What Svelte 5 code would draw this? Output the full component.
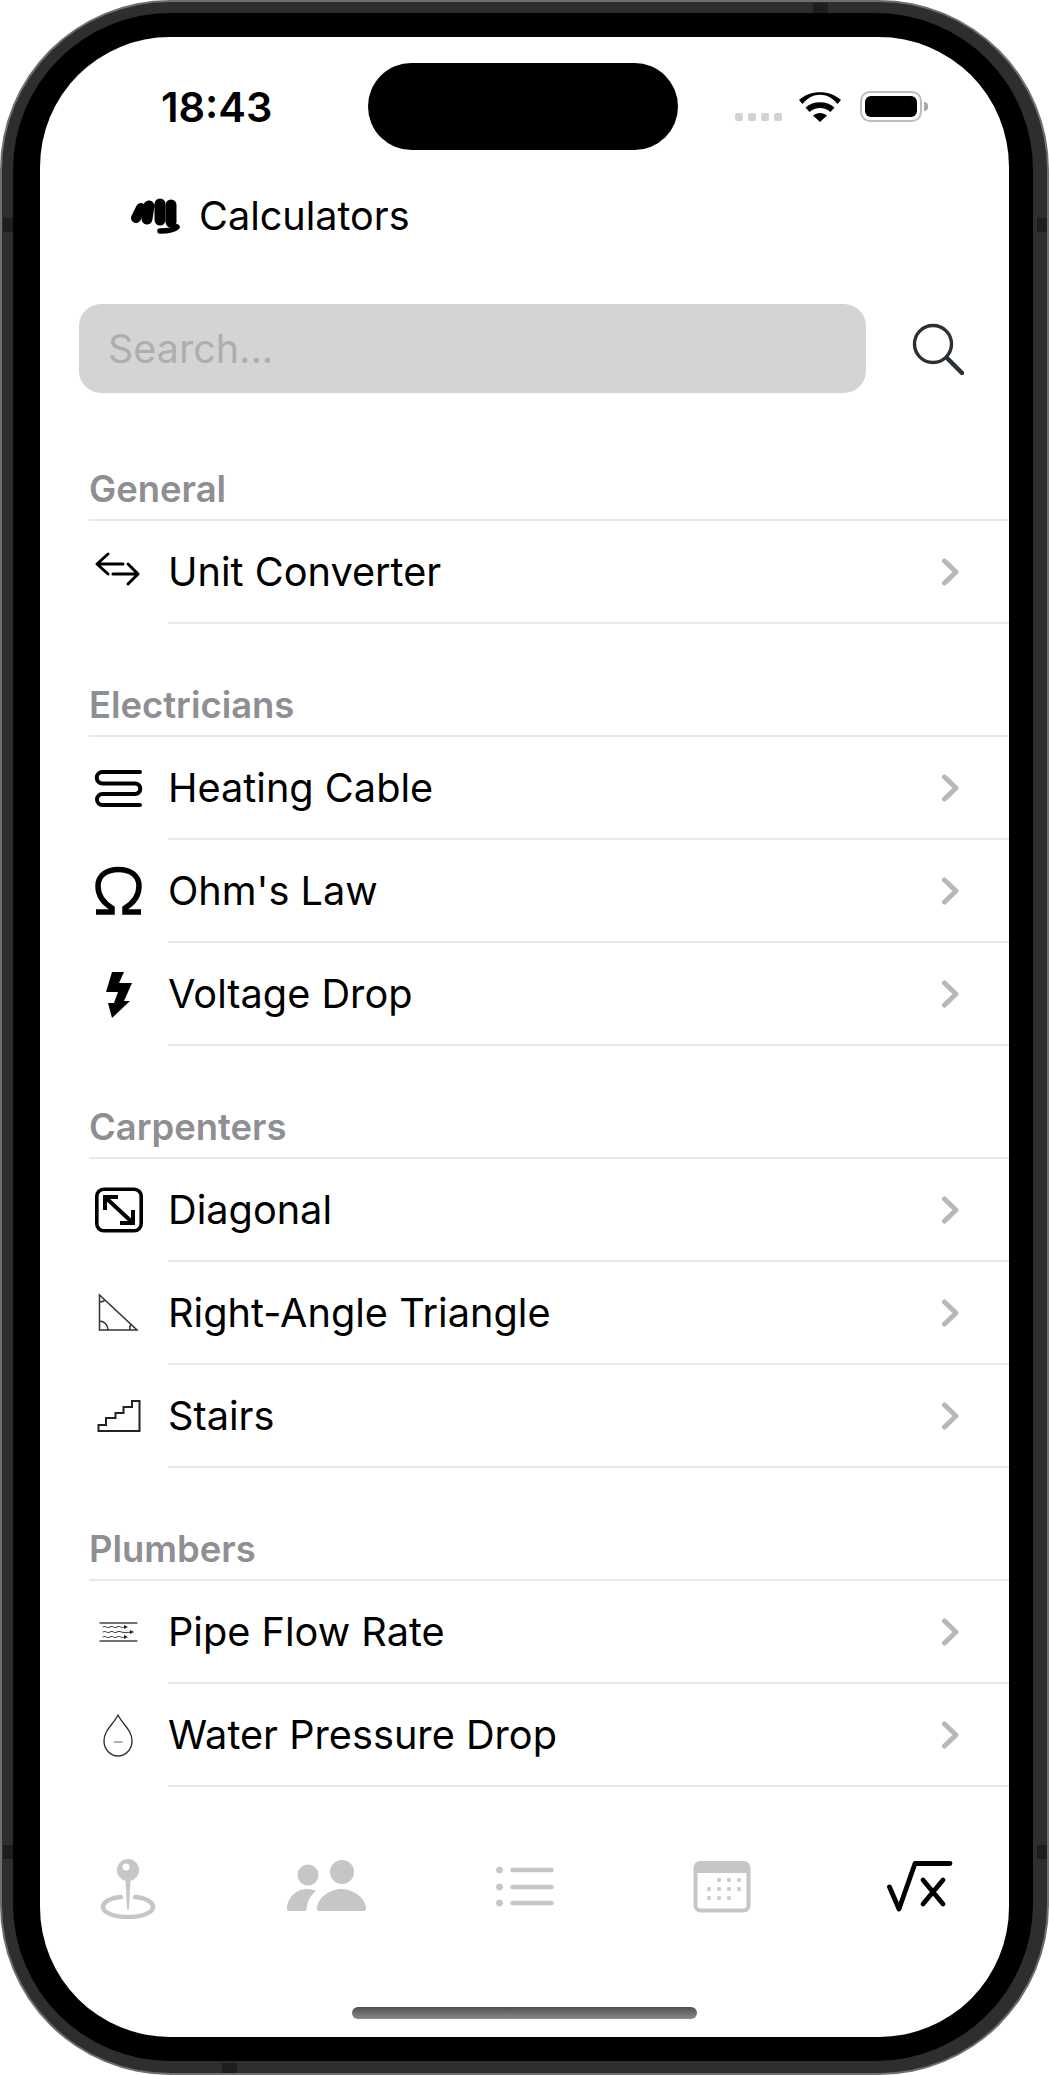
<script>
	const sections = [
		{ title: 'General', rows: [{ label: 'Unit Converter', icon: 'convert' }] },
		{
			title: 'Electricians',
			rows: [
				{ label: 'Heating Cable', icon: 'cable' },
				{ label: "Ohm's Law", icon: 'ohm' },
				{ label: 'Voltage Drop', icon: 'bolt' }
			]
		},
		{
			title: 'Carpenters',
			rows: [
				{ label: 'Diagonal', icon: 'diagonal' },
				{ label: 'Right-Angle Triangle', icon: 'triangle' },
				{ label: 'Stairs', icon: 'stairs' }
			]
		},
		{
			title: 'Plumbers',
			rows: [
				{ label: 'Pipe Flow Rate', icon: 'pipe' },
				{ label: 'Water Pressure Drop', icon: 'drop' }
			]
		}
	];
</script>

{#snippet rowIcon(name)}
	<svg class="row-icon" viewBox="0 0 79 101" fill="none" stroke="#000" stroke-linecap="round" stroke-linejoin="round">
		{#if name === 'convert'}
			<path stroke-width="3" d="M8 43H34M19 33 8 43l11 10M24 53H49M39 43l10 10-10 10" />
		{:else if name === 'cable'}
			<path stroke-width="4" d="M51 35H13.500a5.750 5.750 0 0 0 0 11.500H46a5.250 5.250 0 0 1 0 10.500H13.500a5.500 5.500 0 0 0 0 11H51" />
		{:else if name === 'ohm'}
			<path stroke-width="5.500" stroke-linecap="butt" stroke-linejoin="miter" d="M7 27H23V23C13 17 9 9 9 1 9-10 18-15.500 29.500-15.500S50-10 50 1C50 9 46 17 36 23V27H52" transform="translate(0 45)" />
		{:else if name === 'bolt'}
			<path fill="#000" stroke="none" d="M23 29H35L30 40H43L35 58H41L23 75 19 60H25L29 49H17Z" />
		{:else if name === 'diagonal'}
			<rect x="7.800" y="30.300" width="44.400" height="41.400" rx="7" stroke-width="3.600" />
			<path stroke-width="4" stroke-linecap="butt" stroke-linejoin="miter" d="M16 38 44 64M16 51V38H29M44 51V64H31" />
		{:else if name === 'triangle'}
			<path stroke="#333" stroke-width="1.500" stroke-linejoin="miter" d="M10.500 33V68H48ZM10.500 59A9 9 0 0 1 19 68M10.500 40A7 7 0 0 0 16 38M42 62A7 7 0 0 0 41 68" />
		{:else if name === 'stairs'}
			<path stroke="#222" stroke-width="2" stroke-linecap="butt" stroke-linejoin="miter" d="M9.500 66V60H17V53H26.500V48H34.500V42H43V36H50.500V66Z" />
		{:else if name === 'pipe'}
			<path stroke="#444" stroke-width="1.300" d="M11 42H48M11 60H48" />
			<path stroke="#333" stroke-width="1" d="M14 46c3-2 4 2 7 0s4 2 7 0 4 2 8 0M14 51c3-2 4 2 7 0s4 2 7 0 4 2 14 0M14 56c3-2 4 2 7 0s4 2 7 0 4 2 8 0" />
			<path fill="#222" stroke="none" d="M35 44l4 2-4 2ZM41 49l4 2-4 2ZM35 54l4 2-4 2Z" />
		{:else if name === 'drop'}
			<path stroke="#333" stroke-width="1.400" d="M29 31C24 41 15 46 15 57 15 65 21 72 29 72S43 65 43 57C43 46 34 41 29 31Z" />
			<path stroke="#999" stroke-width="1.600" d="M25.500 58H33" />
		{/if}
	</svg>
{/snippet}

<div class="frame">
	<div class="band">
		<div class="bezel">
			<div class="screen">
				<header class="status">
					<span class="time">18:43</span>
					<div class="island"></div>
					<div class="indicators">
						<div class="signal"><i></i><i></i><i></i><i></i></div>
						<svg class="wifi" viewBox="0 0 42 30">
							<path d="M21 30 14 23.500C18 20 24 20 28 23.500ZM10.500 20 6.500 15.500C14 8.500 28 8.500 35.500 15.500L31.500 20C25.500 14.500 16.500 14.500 10.500 20ZM3.500 12 0 8C11-2.500 31-2.500 42 8L38.500 12C29-.5 13-.5 3.500 12Z" />
						</svg>
						<div class="battery"><div class="cell"></div></div>
						<div class="nub"></div>
					</div>
				</header>

				<div class="title">
					<svg class="fist" viewBox="0 0 50 37" fill="none" stroke="#000" stroke-linecap="round">
						<path stroke-width="10" d="M11 10 6 20" />
						<path stroke-width="11" d="M19 8 17 21M30 6V22" />
						<path stroke-width="11" d="M41 7V24" />
						<path stroke-width="5.500" d="M30 33C37 33 44 32 47 29" />
					</svg>
					<span>Calculators</span>
				</div>

				<div class="search">
					<div class="field">Search...</div>
					<svg class="search-icon" viewBox="0 0 52 52" fill="none" stroke="#2b3034" stroke-width="3.400" stroke-linecap="round">
						<circle cx="21" cy="21" r="18.500" />
						<path stroke-width="4.500" d="M35 35 50 50" />
					</svg>
				</div>

				<div class="list">
					{#each sections as section}
						<section>
							<h2>{section.title}</h2>
							{#each section.rows as row}
								<div class="row">
									{@render rowIcon(row.icon)}
									<div class="row-main">
										<span>{row.label}</span>
										<svg class="chevron" viewBox="0 0 18 28" fill="none" stroke="#b8b8b8" stroke-width="5" stroke-linecap="round" stroke-linejoin="round">
											<path d="M3.500 3 15 14 3.500 25" />
										</svg>
									</div>
								</div>
							{/each}
						</section>
					{/each}
				</div>

				<nav class="tabs">
					<svg viewBox="0 0 80 60" fill="#c6c6c6">
						<path fill="none" stroke="#c6c6c6" stroke-width="4.500" stroke-linecap="round" d="M33 38C22 39 15 43 15 48 15 54 27 58 40 58S65 54 65 48C65 43 58 39 47 38" />
						<circle cx="40" cy="11" r="11" />
						<circle cx="38" cy="8" r="3.500" fill="#fff" />
						<path d="M37.500 20H42.500L41 50H39Z" />
					</svg>
					<svg viewBox="0 0 80 60" fill="#c6c6c6">
						<circle cx="22" cy="16" r="10.500" />
						<circle cx="56" cy="13" r="12" />
						<path d="M1 50C1 39 10 30 21 30 25 30 28 31 30 32 25 36 21 42 20.500 50 20.500 51 20 52 19 52H3C2 52 1 51 1 50Z" />
						<path d="M31 50C31 39 44 30 55.500 30S80 39 80 50C80 51 79 52 77 52H33C32 52 31 51 31 50Z" />
					</svg>
					<svg viewBox="0 0 80 60" fill="#c6c6c6" stroke="#c6c6c6" stroke-linecap="round">
						<circle cx="15.500" cy="11" r="3" />
						<circle cx="15.500" cy="28" r="3" />
						<circle cx="15.500" cy="44" r="3" />
						<path stroke-width="4.500" d="M28.500 11H67.500M28.500 28H67.500M28.500 44H67.500" />
					</svg>
					<svg viewBox="-1 0 80 60" fill="#c6c6c6">
						<rect x="13.500" y="4.500" width="53" height="47" rx="5" fill="none" stroke="#c6c6c6" stroke-width="4" />
						<path d="M12 8a6 6 0 0 1 6-6H62a6 6 0 0 1 6 6V14H12Z" />
						<g fill="#cfcfcf">
							<rect x="35" y="19" width="4" height="4" rx="1" /><rect x="45" y="19" width="4" height="4" rx="1" /><rect x="55" y="19" width="4" height="4" rx="1" />
							<rect x="25" y="28" width="4" height="4" rx="1" /><rect x="35" y="28" width="4" height="4" rx="1" /><rect x="45" y="28" width="4" height="4" rx="1" /><rect x="55" y="28" width="4" height="4" rx="1" />
							<rect x="25" y="37" width="4" height="4" rx="1" /><rect x="35" y="37" width="4" height="4" rx="1" /><rect x="45" y="37" width="4" height="4" rx="1" />
						</g>
					</svg>
					<svg viewBox="0 0 80 60" fill="none" stroke="#000" stroke-width="4.800" stroke-linecap="round" stroke-linejoin="round">
						<path d="M10.500 28 20 50 36 4.500H71" />
						<path stroke-width="4.800" d="M44 21 64 45M64 21 44 45" />
					</svg>
				</nav>

				<div class="home"></div>
			</div>
		</div>
	</div>
	<i class="notch" style="left:3px;top:218px"></i>
	<i class="notch" style="left:3px;top:1845px"></i>
	<i class="notch" style="right:2px;top:218px"></i>
	<i class="notch" style="right:2px;top:1845px"></i>
	<i class="notch wide" style="left:813px;top:3px"></i>
	<i class="notch wide" style="left:222px;bottom:2px"></i>
</div>

<style>
	:global(body) {
		background: #fff;
	}

	.frame {
		position: relative;
		width: 1049px;
		height: 2075px;
		padding: 2px;
		box-sizing: border-box;
		background: #6f6f6f;
		border-radius: 170px;
		font-family: Inter, 'Liberation Sans', sans-serif;
		color: #000;
	}

	.band {
		height: 100%;
		padding: 11px 14px 12px 11px;
		box-sizing: border-box;
		background: #2e2e2e;
		border-radius: 168px;
	}

	.bezel {
		height: 100%;
		padding: 24px 24px 24px 27px;
		box-sizing: border-box;
		background: #000;
		border-radius: 157px;
	}

	.screen {
		height: 100%;
		display: flex;
		flex-direction: column;
		background: #fff;
		border-radius: 130px;
		overflow: hidden;
	}

	.notch {
		position: absolute;
		width: 10px;
		height: 14px;
		background: #1e1e1e;
	}

	.notch.wide {
		width: 15px;
		height: 10px;
	}

	.status {
		display: flex;
		align-items: center;
		height: 87px;
		margin-top: 26px;
		flex: none;
	}

	.time {
		width: 328px;
		padding-left: 121px;
		box-sizing: border-box;
		font-size: 41.500px;
		font-weight: 600;
	}

	.island {
		width: 310px;
		height: 87px;
		background: #000;
		border-radius: 44px;
		flex: none;
	}

	.indicators {
		display: flex;
		align-items: center;
		margin-left: 57px;
		height: 30px;
	}

	.signal {
		display: flex;
		gap: 5px;
		align-self: flex-end;
		margin-bottom: 1px;
	}

	.signal i {
		width: 8px;
		height: 8px;
		background: #d2d2d2;
		border-radius: 2px;
	}

	.wifi {
		width: 42px;
		height: 30px;
		margin-left: 17px;
	}

	.battery {
		width: 62px;
		height: 31px;
		margin-left: 19px;
		padding: 3px;
		box-sizing: border-box;
		border: 2px solid #bdbdbd;
		border-radius: 10px;
	}

	.cell {
		height: 100%;
		background: #000;
		border-radius: 6px;
	}

	.nub {
		width: 4px;
		height: 9px;
		margin-left: 2px;
		background: #a8a8a8;
		border-radius: 0 4px 4px 0;
	}

	.title {
		display: flex;
		align-items: center;
		height: 60px;
		margin-top: 36px;
		padding-left: 90px;
		font-size: 39.600px;
		flex: none;
	}

	.fist {
		width: 50px;
		height: 37px;
		margin-right: 19px;
	}

	.search {
		display: flex;
		align-items: center;
		margin-top: 58px;
		padding-left: 39px;
		flex: none;
	}

	.field {
		width: 787px;
		height: 89px;
		line-height: 91px;
		padding-left: 29px;
		box-sizing: border-box;
		background: #d4d4d4;
		border-radius: 22px;
		color: #aeaeae;
		font-size: 39.500px;
	}

	.search-icon {
		width: 52px;
		height: 52px;
		margin-left: 46px;
	}

	.list {
		margin-top: 15px;
		flex: none;
	}

	h2 {
		height: 113px;
		margin: 0 0 0 49px;
		padding-bottom: 8px;
		box-sizing: border-box;
		display: flex;
		align-items: flex-end;
		line-height: 44px;
		border-bottom: 2px solid #e8e8e8;
		color: #8e8e93;
		font-size: 36.400px;
		font-weight: 600;
	}

	.row {
		display: flex;
		height: 103px;
		padding-left: 49px;
		box-sizing: border-box;
	}

	.row-icon {
		width: 79px;
		height: 101px;
		flex: none;
	}

	.row-main {
		flex: 1;
		display: flex;
		align-items: center;
		justify-content: space-between;
		padding-right: 50px;
		border-bottom: 2px solid #e8e8e8;
		font-size: 39.700px;
	}

	.chevron {
		width: 18px;
		height: 28px;
	}

	.tabs {
		display: flex;
		justify-content: space-between;
		margin-top: auto;
		padding: 0 50px 0 48px;
		flex: none;
	}

	.tabs svg {
		width: 80px;
		height: 60px;
	}

	.home {
		width: 345px;
		height: 12px;
		margin: 88px 0 18px 312px;
		background: linear-gradient(#4f4f4f, #8a8a8a);
		border-radius: 6px;
		flex: none;
	}
</style>
